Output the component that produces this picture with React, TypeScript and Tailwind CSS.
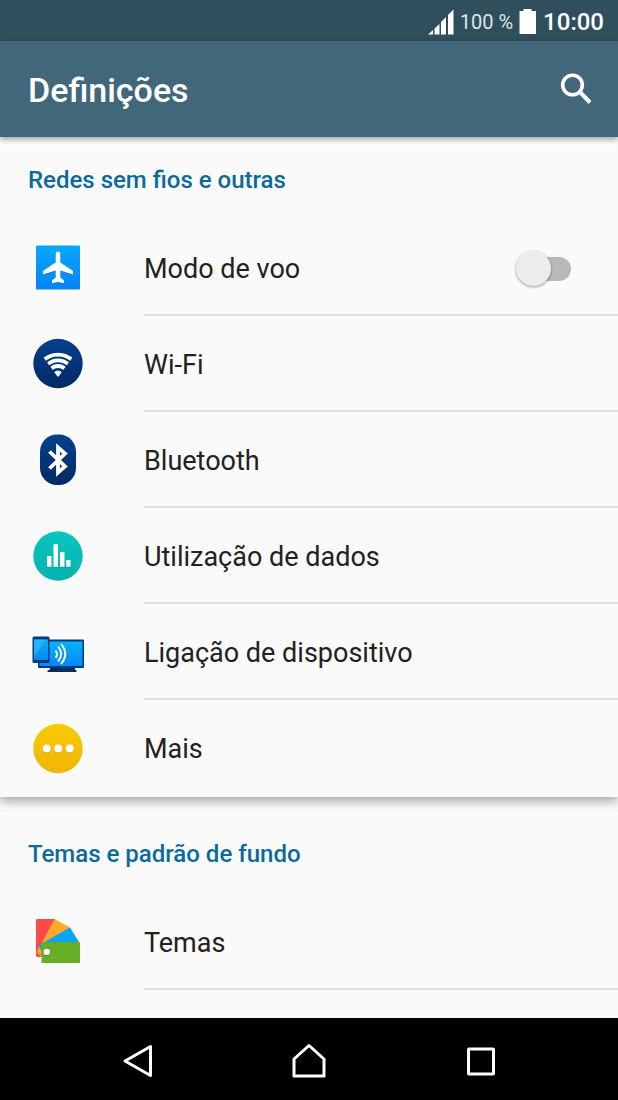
import type { ReactNode } from "react";

const AirplaneIcon = () => (
  <svg width="56" height="56" viewBox="0 0 56 56" aria-hidden="true">
    <defs>
      <linearGradient id="airplane-bg" x1="0" y1="0" x2="0" y2="1">
        <stop offset="0" stopColor="#06a9fa" />
        <stop offset="1" stopColor="#0484f8" />
      </linearGradient>
    </defs>
    <rect x="6" y="5.500" width="44" height="44" rx="1" fill="url(#airplane-bg)" />
    <path
      d="M28 12.500c-1.500 0-2.300 1.200-2.300 2.700v8.300L13 32v3.600l12.700-4v7L22 41.500v2.700l6-1.200 6 1.200v-2.700l-3.700-2.900v-7l12.700 4V32l-12.700-8.500v-8.300c0-1.500-.8-2.700-2.300-2.700z"
      fill="#0566c0"
      opacity=".45"
    />
    <path
      d="M28 11.500c-1.500 0-2.300 1.200-2.300 2.700v8.300L13 31v3.600l12.700-4v7L22 40.500v2.700l6-1.200 6 1.200v-2.700l-3.700-2.900v-7l12.700 4V31l-12.700-8.500v-8.300c0-1.500-.8-2.700-2.300-2.700z"
      fill="#fff"
    />
  </svg>
);

const WifiIcon = () => (
  <svg width="56" height="56" viewBox="0 0 56 56" aria-hidden="true">
    <defs>
      <linearGradient id="wifi-bg" x1="0" y1="0" x2="0" y2="1">
        <stop offset="0" stopColor="#03408a" />
        <stop offset="1" stopColor="#012a66" />
      </linearGradient>
      <clipPath id="wifi-cone">
        <path d="M28 41 10.500 17.500V8h35v9.500z" />
      </clipPath>
    </defs>
    <circle cx="28" cy="27.500" r="24.700" fill="url(#wifi-bg)" />
    <g clipPath="url(#wifi-cone)" fill="none" stroke="#fff" strokeWidth="3.800">
      <circle cx="28" cy="40" r="21.300" />
      <circle cx="28" cy="40" r="15.600" />
      <circle cx="28" cy="40" r="10" />
      <circle cx="28" cy="40" r="3.500" fill="#fff" />
    </g>
  </svg>
);

const BluetoothIcon = () => (
  <svg width="56" height="56" viewBox="0 0 56 56" aria-hidden="true">
    <defs>
      <linearGradient id="bluetooth-bg" x1="0" y1="0" x2="0" y2="1">
        <stop offset="0" stopColor="#03418c" />
        <stop offset="1" stopColor="#012a66" />
      </linearGradient>
    </defs>
    <rect x="10" y="2.500" width="36" height="50.500" rx="17" fill="url(#bluetooth-bg)" />
    <path
      d="M19.500 19.500 35 34.500l-7 6V15.500l7 6L19.500 36.500"
      fill="none"
      stroke="#fff"
      strokeWidth="3.800"
    />
  </svg>
);

const DataIcon = () => (
  <svg width="56" height="56" viewBox="0 0 56 56" aria-hidden="true">
    <defs>
      <linearGradient id="data-bg" x1="0" y1="0" x2="0" y2="1">
        <stop offset="0" stopColor="#08c6c0" />
        <stop offset="1" stopColor="#06b2ae" />
      </linearGradient>
    </defs>
    <circle cx="28" cy="28" r="24.700" fill="url(#data-bg)" />
    <path
      d="M17 29h4.500v11H17zM23.500 17.500H28V40h-4.500zM30 25h4.500v15H30zM36.300 33.500h4.200V40h-4.200z"
      fill="#058e8b"
      opacity=".4"
    />
    <path
      d="M17 28h4.500v10.800H17zM23.500 16.300H28v22.500h-4.500zM30 24h4.500v14.800H30zM36.300 32h4.200v6.800h-4.200z"
      fill="#fff"
    />
  </svg>
);

const DevicesIcon = () => (
  <svg width="56" height="56" viewBox="0 0 56 56" aria-hidden="true">
    <defs>
      <linearGradient id="devices-bg" x1="0" y1="0" x2="0" y2="1">
        <stop offset="0" stopColor="#07b1fb" />
        <stop offset="1" stopColor="#0587f6" />
      </linearGradient>
    </defs>
    <path d="M20 43h25v2.500l1.500 1V48h-29v-1.500l2.500-1z" fill="#012c66" />
    <rect x="8" y="15.500" width="46" height="28.500" rx="1" fill="#023a7e" />
    <rect x="9.500" y="17.500" width="43" height="24.500" fill="url(#devices-bg)" />
    <rect x="2.500" y="12.500" width="17" height="26.500" rx="1.500" fill="#023a7e" />
    <rect x="4" y="15.500" width="14" height="20.500" fill="url(#devices-bg)" />
    <path d="M4 15.500h12L4 33z" fill="#38bdff" opacity=".6" />
    <g fill="none" stroke="#fff" strokeWidth="1.900">
      <path d="M25.500 26.500q3 3.800 0 7.500" />
      <path d="M28 22.500q6.500 7.500 0 15" />
      <path d="M31 20q8.500 10 0 20" />
    </g>
  </svg>
);

const MoreIcon = () => (
  <svg width="56" height="56" viewBox="0 0 56 56" aria-hidden="true">
    <defs>
      <linearGradient id="more-bg" x1="0" y1="0" x2="0" y2="1">
        <stop offset="0" stopColor="#f8cc05" />
        <stop offset="1" stopColor="#f1b405" />
      </linearGradient>
    </defs>
    <circle cx="28" cy="28.500" r="24.700" fill="url(#more-bg)" />
    <g fill="#c98d02" opacity=".5">
      <circle cx="16.700" cy="29.700" r="4" />
      <circle cx="28.200" cy="29.700" r="4" />
      <circle cx="39.700" cy="29.700" r="4" />
    </g>
    <g fill="#fff">
      <circle cx="16.700" cy="28.500" r="4" />
      <circle cx="28.200" cy="28.500" r="4" />
      <circle cx="39.700" cy="28.500" r="4" />
    </g>
  </svg>
);

const ThemesIcon = () => (
  <svg width="56" height="56" viewBox="0 0 56 56" aria-hidden="true">
    <path d="M7.500 5H25v38H7.500Q6 43 6 41.500v-35Q6 5 7.500 5z" fill="#fb4a4b" />
    <path d="M24.500 5 40 13.500 25 37l-13.500 6-5-4.500z" fill="#fdaa2b" />
    <path d="M40 13.500 49.500 29 12 39l-3-8z" fill="#06a5f5" />
    <path d="M6.500 35.500 12 41v2.500z" fill="#fb6d45" />
    <rect x="11.500" y="28" width="38.500" height="21" rx="1" fill="#66ad28" />
    <circle cx="16.800" cy="39" r="3.200" fill="#3f8714" />
    <circle cx="16.800" cy="38" r="3.200" fill="#fff" />
  </svg>
);

type RowProps = {
  icon: ReactNode;
  label: string;
};

const rowClass = "flex h-24 w-full items-center pl-[30px] text-left text-[27px]";
const cellClass =
  "ml-[58px] flex h-full flex-1 items-center border-b-2 border-[#e0e0e0] pt-1";

const Row = ({ icon, label }: RowProps) => (
  <li className="group">
    <button type="button" className={rowClass}>
      {icon}
      <span className={`${cellClass} group-last:border-transparent`}>{label}</span>
    </button>
  </li>
);

const SectionTitle = ({ children }: { children: ReactNode }) => (
  <h2 className="h-[83px] px-7 pt-7 text-[24px] leading-[30px] font-medium text-[#0b6a9d]">
    {children}
  </h2>
);

const App = () => {
  return (
    <div className="flex h-screen flex-col overflow-hidden bg-[#fafafa] font-['Roboto',sans-serif] text-[#212121]">
      <div className="flex h-[41px] shrink-0 items-center justify-end bg-[#304f5d] pt-0.5 pr-3.5 text-white">
        <svg width="26" height="26" viewBox="0 0 26 26" fill="#fff" aria-hidden="true">
          <path d="M0 25.500 5 21v4.500zM6.500 19.500l5-4.500v10.500h-5zM13 13l5-5v17.500h-5zM20 6l5.500-5.500v25H20z" />
        </svg>
        <span className="ml-1.5 text-[20px] text-[#dfe5e8]">100 %</span>
        <svg
          className="ml-1.5"
          width="18"
          height="26"
          viewBox="0 0 18 26"
          fill="#fff"
          aria-hidden="true"
        >
          <path d="M4.500 0h8v2H17v23H.5V2h4z" />
        </svg>
        <span className="ml-1.5 text-[24px] font-medium">10:00</span>
      </div>

      <header className="z-10 flex h-24 shrink-0 items-center justify-between bg-[#43677a] pt-0.5 pr-6 pl-7 text-white shadow-[0_2px_6px_rgba(0,0,0,0.4)]">
        <h1 className="text-[34px] font-medium">Definições</h1>
        <button type="button" aria-label="Pesquisar">
          <svg width="36" height="36" viewBox="0 0 36 36" fill="none" aria-hidden="true">
            <circle cx="14.500" cy="13" r="9.800" stroke="#fff" strokeWidth="3.600" />
            <path d="m21.500 19.500 10.500 11" stroke="#fff" strokeWidth="4" />
          </svg>
        </button>
      </header>

      <main className="flex-1 overflow-hidden">
        <section className="pb-px shadow-[0_4px_10px_rgba(0,0,0,0.35)]">
          <SectionTitle>Redes sem fios e outras</SectionTitle>
          <ul>
            <li>
              <label className={rowClass}>
                <AirplaneIcon />
                <span className={`${cellClass} justify-between pr-[47px]`}>
                  Modo de voo
                  <input
                    type="checkbox"
                    role="switch"
                    className="relative h-6 w-12 appearance-none rounded-full bg-[#b9b9b9] before:absolute before:-top-1.5 before:-left-[7px] before:size-[35px] before:rounded-full before:bg-[#ececec] before:shadow-[0_1px_3px_rgba(0,0,0,0.4)] checked:bg-[#7fb2cc] checked:before:left-5"
                  />
                </span>
              </label>
            </li>
            <Row icon={<WifiIcon />} label="Wi-Fi" />
            <Row icon={<BluetoothIcon />} label="Bluetooth" />
            <Row icon={<DataIcon />} label="Utilização de dados" />
            <Row icon={<DevicesIcon />} label="Ligação de dispositivo" />
            <Row icon={<MoreIcon />} label="Mais" />
          </ul>
        </section>

        <section className="relative mt-[13px] border-t border-[#f0f0f0] bg-[#fafafa]">
          <SectionTitle>Temas e padrão de fundo</SectionTitle>
          <button type="button" className={rowClass}>
            <ThemesIcon />
            <span className={cellClass}>Temas</span>
          </button>
        </section>
      </main>

      <nav className="flex h-[82px] shrink-0 items-center justify-center gap-[116px] bg-black pt-1">
        <button type="button" aria-label="Voltar">
          <svg width="56" height="56" viewBox="0 0 56 56" fill="none" aria-hidden="true">
            <path
              d="M41.500 13.500v29L16 28z"
              stroke="#fff"
              strokeWidth="3"
              strokeLinejoin="round"
            />
          </svg>
        </button>
        <button type="button" aria-label="Início">
          <svg width="56" height="56" viewBox="0 0 56 56" fill="none" aria-hidden="true">
            <path
              d="M28 12.500 43 26v17H13V26z"
              stroke="#fff"
              strokeWidth="3"
              strokeLinejoin="round"
            />
          </svg>
        </button>
        <button type="button" aria-label="Aplicações recentes">
          <svg width="56" height="56" viewBox="0 0 56 56" fill="none" aria-hidden="true">
            <rect x="15.500" y="16" width="25" height="25" rx=".5" stroke="#fff" strokeWidth="3" />
          </svg>
        </button>
      </nav>
    </div>
  );
};

export default App;
